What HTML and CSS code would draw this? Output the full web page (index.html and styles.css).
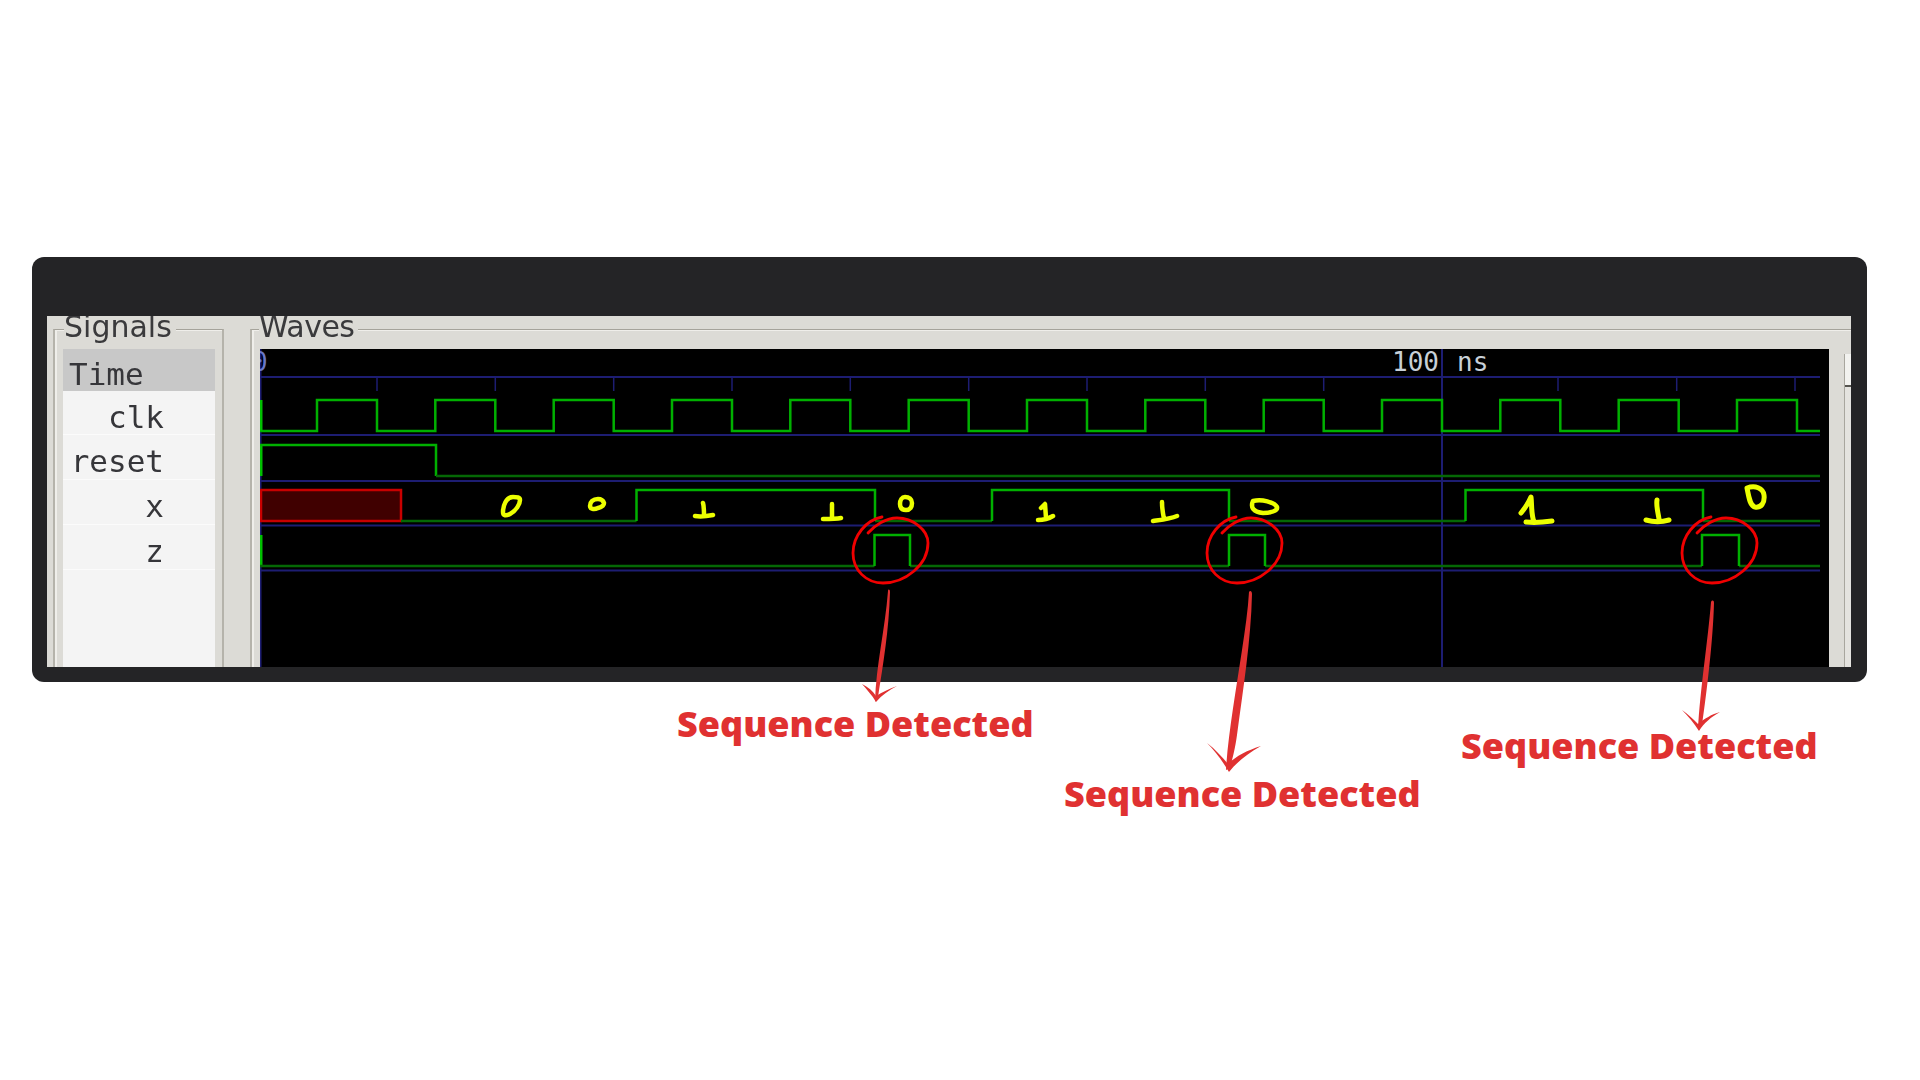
FILE: index.html
```html
<!DOCTYPE html>
<html lang="en">
<head>
    <meta charset="UTF-8">
    <meta name="viewport" content="width=device-width, initial-scale=1.0">
    <title>Sequence Detector Waveform</title>
    <link rel="stylesheet" href="styles.css">
</head>
<body>

    <div class="shot">
        <div class="window">
            <!-- signal names -->
            <div class="group group-signals">
                <span class="legend">Signals</span>
                <div class="signal-list">
                    <div class="signal-time">Time</div>
                    <div class="signal-row">clk</div>
                    <div class="signal-row">reset</div>
                    <div class="signal-row">x</div>
                    <div class="signal-row">z</div>
                </div>
            </div>

            <!-- traces -->
            <div class="group group-waves">
                <span class="legend legend-waves">Waves</span>
                <svg class="waves" viewBox="260 349 1569 318" width="1569" height="318">
                    <g class="grid">
                        <path d="M260 377H1820M260 435H1820M260 481H1820M260 525.500H1820M260 570.500H1820"/>
                        <path d="M260.500 349V667M1442 349V667"/>
                        <path class="ticks" d="M377 377V391M495.300 377V391M613.700 377V391M732 377V391M850.300 377V391M968.700 377V391M1087 377V391M1205.300 377V391M1323.700 377V391M1558 377V391M1676.700 377V391M1795 377V391"/>
                    </g>
                    <text class="time-zero" x="252" y="371">0</text>
                    <text class="time-label" x="1392" y="371">100</text>
                    <text class="time-label" x="1457" y="371">ns</text>

                    <!-- clk -->
                    <polyline class="trace" points="260,431 317,431 317,400 377,400 377,431 435.300,431 435.300,400 495.300,400 495.300,431 553.700,431 553.700,400 613.700,400 613.700,431 672,431 672,400 732,400 732,431 790.300,431 790.300,400 850.300,400 850.300,431 908.700,431 908.700,400 968.700,400 968.700,431 1027,431 1027,400 1087,400 1087,431 1145.300,431 1145.300,400 1205.300,400 1205.300,431 1263.700,431 1263.700,400 1323.700,400 1323.700,431 1382,431 1382,400 1442,400 1442,431 1500.300,431 1500.300,400 1560.300,400 1560.300,431 1618.700,431 1618.700,400 1678.700,400 1678.700,431 1737,431 1737,400 1797,400 1797,431 1820,431"/>
                    <path class="trace-start" d="M261 400V431M261 445V476M261 535V566"/>

                    <!-- reset -->
                    <polyline class="trace" points="260,445 436,445 436,476"/>
                    <path class="trace-low" d="M436 476H1820"/>

                    <!-- x -->
                    <rect class="unknown" x="261" y="490" width="140" height="31"/>
                    <path class="trace-low" d="M401 521H636.500M875 521H992M1229 521H1465.500M1703 521H1820"/>
                    <polyline class="trace" points="636.500,521 636.500,490 875,490 875,521"/>
                    <polyline class="trace" points="992,521 992,490 1229,490 1229,521"/>
                    <polyline class="trace" points="1465.500,521 1465.500,490 1703,490 1703,521"/>

                    <!-- z -->
                    <path class="trace-low" d="M260 566H874.500M910 566H1229M1265 566H1702M1739 566H1820"/>
                    <polyline class="trace" points="874.500,566 874.500,535 910,535 910,566"/>
                    <polyline class="trace" points="1229,566 1229,535 1265,535 1265,566"/>
                    <polyline class="trace" points="1702,566 1702,535 1739,535 1739,566"/>
                </svg>
                <div class="scrollbar"><div class="scroll-thumb"></div></div>
            </div>
        </div>
    </div>

    <!-- hand drawn notes on top of the screenshot -->
    <svg class="notes" viewBox="0 0 1920 1080" width="1920" height="1080">
        <g class="digits">
            <path d="M513 497C506 497 503 506 503 512C503 516 506 516 510 514C516 511 520 504 520 500C520 497 517 497 513 497Z"/>
            <path d="M598 499C593 499 590 502 590 506C590 509 594 510 598 508C602 507 604 505 604 503C603 500 601 499 598 499Z"/>
            <path d="M703 503C704 506 704 511 704 516M695 516C701 517 708 516 713 515"/>
            <path d="M832 504C832 508 832 513 832 518M823 519C829 519 836 519 841 518"/>
            <path d="M905 497C902 497 900 500 900 504C900 509 903 510 906 510C910 510 912 507 912 503C912 499 909 497 905 497Z"/>
            <path d="M1041 508L1045 504L1046 518M1038 520C1042 520 1048 519 1053 516"/>
            <path d="M1162 502C1162 508 1163 514 1164 519M1153 521C1160 520 1170 519 1177 516"/>
            <path d="M1253 501C1262 499 1274 502 1277 507C1278 511 1270 513 1263 513C1254 512 1250 508 1253 501Z"/>
            <path class="digit-heavy" d="M1521 513C1525 508 1529 502 1531 497C1532 505 1531 514 1534 522M1526 522C1535 523 1545 522 1552 521"/>
            <path class="digit-heavy" d="M1657 500C1656 506 1658 512 1659 519M1646 520C1653 522 1662 522 1669 520"/>
            <path class="digit-heavy" d="M1747 488C1755 485 1763 488 1764 495C1765 503 1761 508 1755 507C1750 506 1749 498 1747 488Z"/>
        </g>

        <g class="rings">
            <path id="ring" d="M868 533C875 525 886 518 897 518C913 518 928 530 928 543C928 565 905 583 883 583C866 583 853 570 853 553C853 536 866 520 882 517"/>
            <use href="#ring" x="354"/>
            <use href="#ring" x="829"/>
        </g>

        <g class="arrows">
            <path d="M888 591C888 589 890 589 890 592C889 630 883 665 878 697L875 702C876 665 885 630 888 591Z"/>
            <path d="M862 684C868 687 873 691 876 696C882 692 889 689 897 686C889 690 882 695 876 702C872 695 867 690 862 684Z"/>

            <path d="M1249 592C1250 590 1252 591 1252 594C1251 640 1243 690 1237 735C1235 750 1232 760 1230 768L1226 770C1228 735 1236 690 1242 650C1245 630 1248 610 1249 592Z"/>
            <path d="M1207 743C1215 749 1222 757 1228 764C1236 756 1248 750 1261 746C1247 754 1237 762 1229 772C1223 762 1216 752 1207 743Z"/>

            <path d="M1711 602C1712 600 1714 600 1714 603C1713 640 1707 690 1702 725L1698 730C1700 690 1708 640 1711 602Z"/>
            <path d="M1682 710C1688 714 1693 719 1698 724C1704 719 1712 714 1720 712C1711 717 1704 723 1699 731C1694 723 1688 716 1682 710Z"/>
        </g>
    </svg>

    <div class="note note-one">Sequence Detected</div>
    <div class="note note-two">Sequence Detected</div>
    <div class="note note-three">Sequence Detected</div>

</body>
</html>
```

FILE: styles.css
```css
body {
    margin: 0;
    background-color: white;
    width: 1920px;
    height: 1080px;
    overflow: hidden;
    position: relative;
    padding-top: 257px;
    box-sizing: border-box;
}

.shot {
    margin-left: 32px;
    width: 1835px;
    height: 425px;
    background-color: #242426;
    border-radius: 12px;
    padding: 59px 16px 15px 15px;
    box-sizing: border-box;
}

.window {
    display: flex;
    gap: 26px;
    height: 351px;
    padding-left: 6px;
    background-color: #dcdbd6;
    overflow: hidden;
}

.group {
    position: relative;
    margin-top: 13px;
    padding-top: 19px;
    height: 400px;
    box-sizing: border-box;
    border-top: 1px solid #a5a39b;
    border-left: 2px solid #b5b3ab;
    box-shadow: inset 2px 1px 0 #efeeea;
}

.group-signals {
    flex: none;
    width: 171px;
    padding-left: 8px;
    padding-right: 7px;
    border-right: 2px solid #b5b3ab;
}

.group-waves {
    flex: 1;
    min-width: 0;
    display: flex;
    padding-left: 8px;
}

.legend {
    position: absolute;
    top: -14px;
    left: 9px;
    padding-right: 4px;
    background-color: #dcdbd6;
    color: #3a3a3c;
    font-family: "DejaVu Sans", sans-serif;
    font-size: 30px;
    line-height: 22px;
    filter: blur(0.5px);
}

.legend-waves {
    left: 7px;
    letter-spacing: -0.5px;
}

.signal-list {
    background-color: #f4f4f4;
    color: #36363a;
    font-family: "DejaVu Sans Mono", monospace;
    font-size: 31px;
    height: 100%;
}

.signal-time {
    height: 34px;
    padding: 8px 0 0 6px;
    line-height: 34px;
    background-color: #c8c8c8;
    filter: blur(0.5px);
}

.signal-row {
    height: 36px;
    padding: 8px 51px 0 0;
    line-height: 36px;
    text-align: right;
    border-bottom: 1px solid #fbfbfb;
    filter: blur(0.5px);
}

.signal-row:nth-child(2) {
    height: 35px;
}

.waves {
    display: block;
    flex: none;
    background-color: black;
}

.grid path {
    fill: none;
    stroke: #1d1d72;
    stroke-width: 2;
}

.grid .ticks {
    stroke-width: 1.500;
}

.time-zero {
    fill: #6a78c8;
    font-family: "DejaVu Sans Mono", monospace;
    font-size: 26px;
}

.time-label {
    fill: #c8d0d8;
    font-family: "DejaVu Sans Mono", monospace;
    font-size: 26px;
}

.trace {
    fill: none;
    stroke: #00b000;
    stroke-width: 2.500;
}

.trace-low {
    fill: none;
    stroke: #056805;
    stroke-width: 2.500;
}

.trace-start {
    fill: none;
    stroke: #00c000;
    stroke-width: 3;
}

.unknown {
    fill: #400000;
    stroke: #c80000;
    stroke-width: 2.500;
}

.scrollbar {
    flex: none;
    margin-left: 15px;
    margin-top: 5px;
    width: 10px;
    height: 340px;
    background-color: #e4e3df;
    border-left: 1px solid #a8a69e;
}

.scroll-thumb {
    height: 31px;
    background-color: #f2f2ef;
    border-bottom: 2px solid #55544f;
}

/* annotations sit on top of the picture */
.notes {
    position: absolute;
    top: 0;
    left: 0;
}

.digits path {
    fill: none;
    stroke: #ecff00;
    stroke-width: 4.500;
    stroke-linecap: round;
    stroke-linejoin: round;
}

.digits .digit-heavy {
    stroke-width: 5;
}

.rings path {
    fill: none;
    stroke: #f00000;
    stroke-width: 2.800;
    stroke-linecap: round;
}

.arrows path {
    fill: #e03131;
}

.note {
    position: absolute;
    color: #e03131;
    font-family: "Open Sans", sans-serif;
    font-weight: 800;
    font-size: 36px;
    line-height: 46px;
    white-space: nowrap;
}

.note-one {
    left: 677px;
    top: 701px;
}

.note-two {
    left: 1064px;
    top: 771px;
}

.note-three {
    left: 1461px;
    top: 723px;
}
```
